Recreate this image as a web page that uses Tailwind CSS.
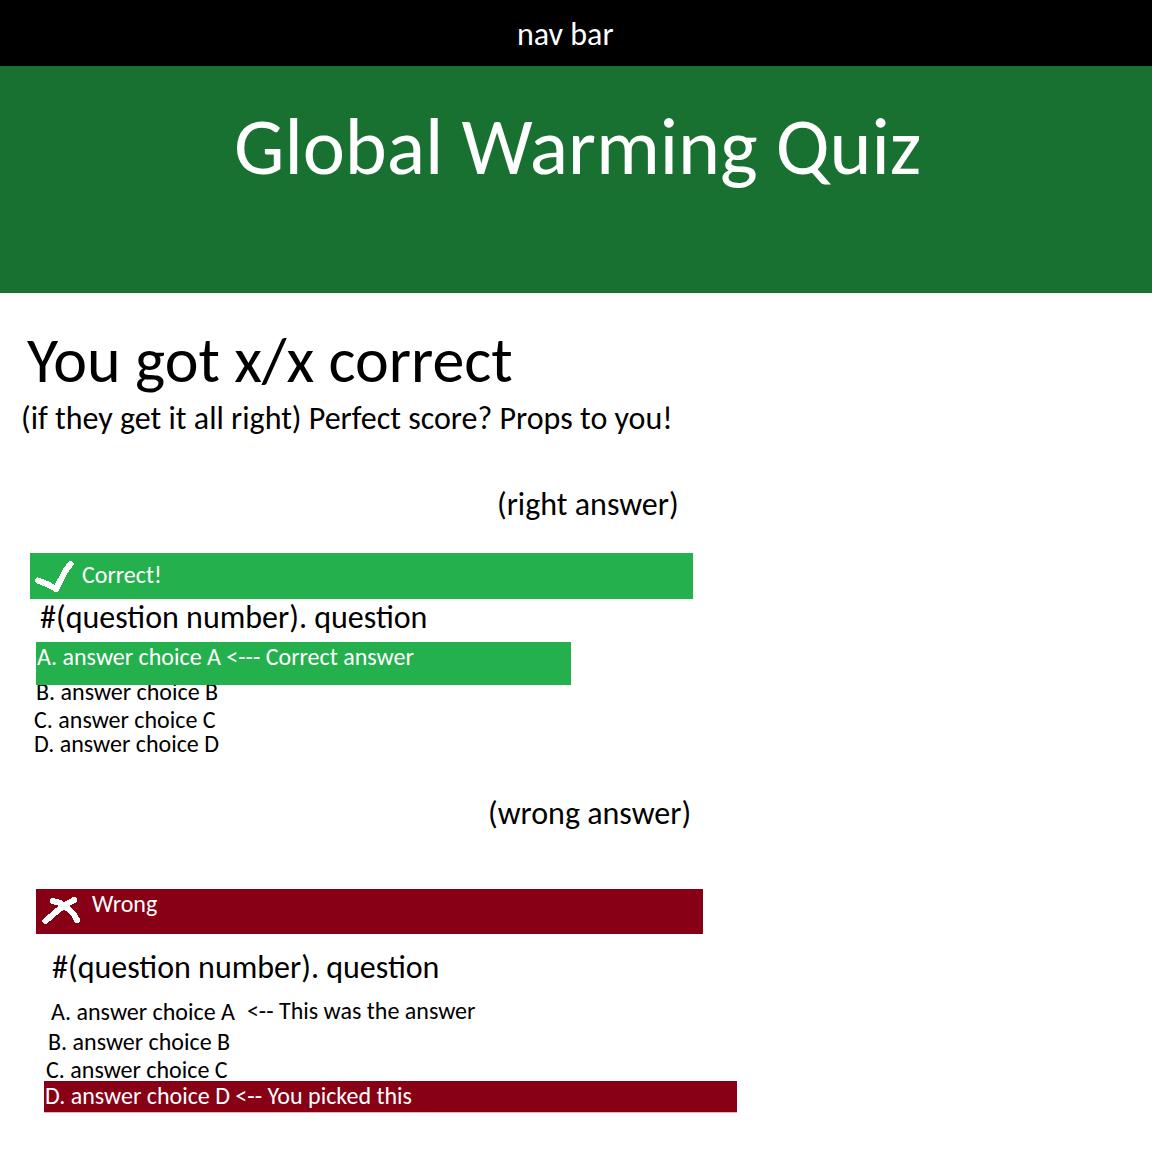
<!DOCTYPE html>
<html lang="en">
<head>
<meta charset="utf-8">
<title>Global Warming Quiz</title>
<script src="https://cdn.jsdelivr.net/npm/@tailwindcss/browser@4"></script>
</head>
<body class="min-h-screen bg-white font-[Calibri,Carlito,Lato,sans-serif] text-black">
<nav class="h-[66px] bg-black pt-[19px] pl-[517px] text-[32px] leading-none text-white">nav bar</nav>
<header class="h-[227px] bg-[#187130] pt-[41px] pl-[234px] text-white">
  <h1 class="text-[80px] leading-none tracking-[-0.05px] whitespace-nowrap">Global Warming Quiz</h1>
</header>
<main class="flex flex-col items-start whitespace-nowrap text-2xl leading-none">
  <h2 class="mt-[35px] ml-[27px] text-[64px] leading-none tracking-[-0.05px]">You got x/x correct</h2>
  <p class="mt-[11px] ml-[21px] text-[32px] leading-none">(if they get it all right) Perfect score? Props to you!</p>

  <p class="mt-[54px] ml-[497px] text-[32px] leading-none">(right answer)</p>
  <div class="mt-8 ml-[30px] flex h-[46px] w-[663px] items-start bg-[#24b14d] text-white">
    <svg class="h-[46px] w-[51px] shrink-0" viewBox="0 0 51 46" fill="none" stroke="currentColor" stroke-width="6" stroke-linecap="round" stroke-linejoin="round" shape-rendering="crispEdges"><path d="M8 27.5L18 31.500L26 36L29.500 29L36 17L40.500 11"/></svg>
    <span class="mt-2.5 ml-px">Correct!</span>
  </div>
  <h3 class="mt-[3px] ml-10 text-[32px] leading-none">#(question number). question</h3>
  <div class="relative mt-2 ml-9 h-[43px] w-[535px] bg-[#24b14d] pt-[3px] pl-px text-white">A. answer choice A &lt;--- Correct answer</div>
  <p class="-mt-[5px] ml-9">B. answer choice B</p>
  <p class="mt-1 ml-[34px]">C. answer choice C</p>
  <p class="ml-[34px]">D. answer choice D</p>

  <p class="mt-[42px] ml-[488px] text-[32px] leading-none">(wrong answer)</p>
  <div class="mt-[59px] ml-9 flex h-[45px] w-[667px] items-start bg-[#880015] text-white">
    <svg class="h-[45px] w-14 shrink-0" viewBox="0 0 56 45" fill="none" stroke="currentColor" stroke-width="6" stroke-linecap="round" stroke-linejoin="round" shape-rendering="crispEdges"><path d="M17 12L24 14C31 19 37 22 41 31M38 11L31 15L21 22L9.500 32"/></svg>
    <span class="mt-[3px]">Wrong</span>
  </div>
  <h3 class="mt-[18px] ml-[52px] text-[32px] leading-none">#(question number). question</h3>
  <div class="mt-4 ml-[51px] flex items-start gap-3"><p>A. answer choice A</p><p class="-mt-px">&lt;-- This was the answer</p></div>
  <p class="mt-1.5 ml-12">B. answer choice B</p>
  <p class="mt-1 ml-[46px]">C. answer choice C</p>
  <div class="relative -mt-px ml-11 h-8 w-[693px] border-b border-[#dfb4ba] bg-[#880015] pt-[3px] pl-px text-white">D. answer choice D &lt;-- You picked this</div>
</main>
</body>
</html>
